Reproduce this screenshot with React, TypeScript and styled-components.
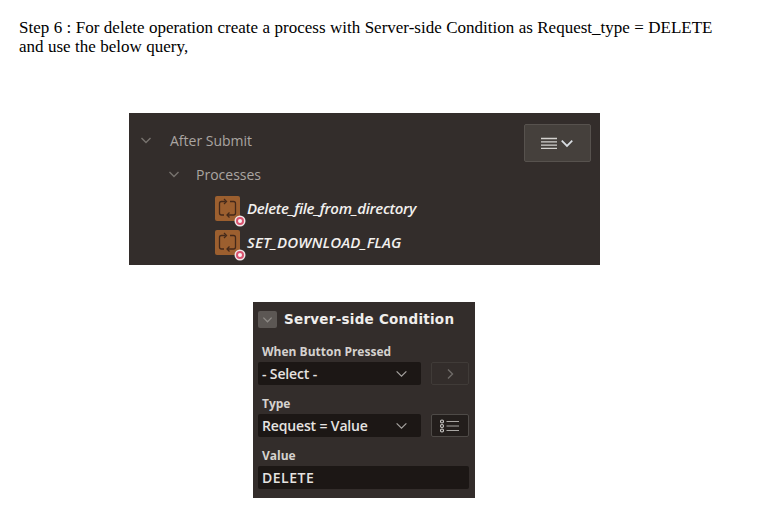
import React from "react";
import styled, { createGlobalStyle } from "styled-components";

const GlobalStyle = createGlobalStyle`
  html, body {
    margin: 0;
    padding: 0;
    background: #ffffff;
  }
`;

const Chevron = ({ size = 12, color = "#77726e", width = 1.4 }: { size?: number; color?: string; width?: number }) => (
  <svg width={size} height={size} viewBox="0 0 12 12" fill="none">
    <path d="M1.5 4 L6 8.5 L10.5 4" stroke={color} strokeWidth={width} />
  </svg>
);

const ProcessIcon = () => (
  <IconBox>
    <svg width="25" height="25" viewBox="0 0 25 25" fill="none">
      <path
        d="M10.5 5.5 H6.5 Q4.5 5.5 4.5 7.5 V17 Q4.5 19 6.5 19 H9 M15 5.5 H18.5 Q20.5 5.5 20.5 7.5 V17 Q20.5 19 18.5 19 H12"
        stroke="#44291a"
        strokeWidth="1.3"
      />
      <path d="M9 3 L11.5 5.5 L9 8 M14.5 16.5 L12 19 L14.5 21.5" stroke="#44291a" strokeWidth="1.3" />
    </svg>
    <Badge />
  </IconBox>
);

export default function App() {
  return (
    <>
      <GlobalStyle />
      <Page>
        <Step>
          Step 6 : For delete operation create a process with Server-side Condition as Request_type = DELETE
          <br />
          and use the below query,
        </Step>
        <TreePanel>
          <TreeLeft>
            <Heading $indent={11} $gap={18}>
              <Chevron />
              <span>After Submit</span>
            </Heading>
            <Heading $indent={39} $gap={16}>
              <Chevron />
              <span>Processes</span>
            </Heading>
            <ProcessRow>
              <ProcessIcon />
              <ProcessName $spacing={-0.33}>Delete_file_from_directory</ProcessName>
            </ProcessRow>
            <ProcessRow>
              <ProcessIcon />
              <ProcessName $spacing={0.15}>SET_DOWNLOAD_FLAG</ProcessName>
            </ProcessRow>
          </TreeLeft>
          <MenuButton>
            <svg width="16" height="13" viewBox="0 0 16 13" fill="none">
              <path d="M0 1.5 H16 M0 4.8 H16 M0 8.1 H16 M0 11.4 H16" stroke="#d4d2cf" strokeWidth="1.3" />
            </svg>
            <Chevron size={14} color="#d8dde2" width={1.5} />
          </MenuButton>
        </TreePanel>
        <ConditionPanel>
          <TitleRow>
            <Toggle>
              <Chevron size={11} color="#8e8a86" />
            </Toggle>
            <Title>Server-side Condition</Title>
          </TitleRow>
          <FieldLabel $top={14}>When Button Pressed</FieldLabel>
          <FieldRow>
            <SelectBox>
              <span>- Select -</span>
              <Chevron size={13} color="#a5a29f" width={1.1} />
            </SelectBox>
            <SideButton>
              <Chevron size={12} color="#6f6b68" />
            </SideButton>
          </FieldRow>
          <FieldLabel $top={10}>Type</FieldLabel>
          <FieldRow>
            <SelectBox>
              <span>Request = Value</span>
              <Chevron size={13} color="#a5a29f" width={1.1} />
            </SelectBox>
            <SideButton $active>
              <svg width="22" height="14" viewBox="0 0 22 14" fill="none">
                <circle cx="3" cy="2.5" r="1.5" stroke="#cfcdca" strokeWidth="1.1" />
                <circle cx="3" cy="7" r="1.5" stroke="#cfcdca" strokeWidth="1.1" />
                <circle cx="3" cy="11.5" r="1.5" stroke="#cfcdca" strokeWidth="1.1" />
                <path d="M7.5 2.5 H20 M7.5 7 H20 M7.5 11.5 H20" stroke="#a9a6a3" strokeWidth="1" />
              </svg>
            </SideButton>
          </FieldRow>
          <FieldLabel $top={10}>Value</FieldLabel>
          <ValueBox>DELETE</ValueBox>
        </ConditionPanel>
      </Page>
    </>
  );
}

const Page = styled.div`
  width: 778px;
  height: 508px;
  overflow: hidden;
  padding-top: 18px;
  box-sizing: border-box;
`;

const Step = styled.p`
  margin: 0 0 0 19px;
  font-family: "Liberation Serif", "Times New Roman", serif;
  font-size: 17px;
  line-height: 19px;
  word-spacing: 0.2px;
  color: #000000;
  white-space: nowrap;
`;

const TreePanel = styled.div`
  display: flex;
  justify-content: space-between;
  align-items: flex-start;
  box-sizing: border-box;
  width: 471px;
  height: 152px;
  margin: 57px 0 0 129px;
  padding: 10px 9px 0 0;
  background: #332d2b;
  font-family: "Open Sans", "Noto Sans", sans-serif;
`;

const TreeLeft = styled.div`
  display: flex;
  flex-direction: column;
`;

const Heading = styled.div<{ $indent: number; $gap: number }>`
  display: flex;
  align-items: center;
  gap: ${(p) => p.$gap}px;
  height: 34px;
  padding-left: ${(p) => p.$indent}px;
  font-size: 14px;
  font-weight: 500;
  color: #aaa5a1;
`;

const ProcessRow = styled.div`
  display: flex;
  align-items: center;
  gap: 7px;
  height: 34px;
  padding-left: 86px;
`;

const IconBox = styled.div`
  position: relative;
  width: 25px;
  height: 25px;
  border-radius: 2px;
  background: #9c5f2f;
  svg {
    display: block;
  }
`;

const Badge = styled.div`
  position: absolute;
  right: -4px;
  bottom: -4px;
  width: 4px;
  height: 4px;
  border: 2.5px solid #d9536f;
  border-radius: 50%;
  background: #fbf3f4;
  box-shadow: 0 0 0 1.5px #efe6e8;
`;

const ProcessName = styled.span<{ $spacing: number }>`
  font-size: 15px;
  font-style: italic;
  font-weight: 600;
  letter-spacing: ${(p) => p.$spacing}px;
  color: #f2f0ee;
`;

const MenuButton = styled.div`
  display: flex;
  align-items: center;
  justify-content: center;
  gap: 3px;
  box-sizing: border-box;
  width: 67px;
  height: 38px;
  margin-top: 1px;
  background: #45403c;
  border: 1px solid #57524e;
  border-radius: 2px;
`;

const ConditionPanel = styled.div`
  box-sizing: border-box;
  width: 222px;
  height: 196px;
  margin: 37px 0 0 253px;
  padding: 8px 6px 0 5px;
  background: #332d2b;
  font-family: "Open Sans", "Noto Sans", sans-serif;
`;

const TitleRow = styled.div`
  display: flex;
  align-items: center;
  gap: 7px;
  height: 19px;
`;

const Toggle = styled.div`
  display: flex;
  align-items: center;
  justify-content: center;
  width: 19px;
  height: 17px;
  border-radius: 2px;
  background: #5c5754;
`;

const Title = styled.span`
  margin-bottom: 1px;
  font-family: "DejaVu Sans", sans-serif;
  font-size: 13.5px;
  font-weight: 700;
  letter-spacing: 0.25px;
  color: #f0eeec;
`;

const FieldLabel = styled.div<{ $top: number }>`
  margin: ${(p) => p.$top}px 0 0 4px;
  height: 18px;
  line-height: 18px;
  font-size: 12px;
  font-weight: 700;
  color: #d5d2cf;
`;

const FieldRow = styled.div`
  display: flex;
  justify-content: space-between;
  margin-top: 1px;
`;

const SelectBox = styled.div`
  display: flex;
  align-items: center;
  justify-content: space-between;
  box-sizing: border-box;
  width: 163px;
  height: 23px;
  padding: 0 13px 0 4px;
  border-radius: 2px;
  background: #1c1715;
  font-size: 14px;
  font-weight: 600;
  letter-spacing: -0.15px;
  color: #e6e3e1;
`;

const SideButton = styled.div<{ $active?: boolean }>`
  display: flex;
  align-items: center;
  justify-content: center;
  box-sizing: border-box;
  width: 38px;
  height: 23px;
  border: 1px solid ${(p) => (p.$active ? "#4e4a47" : "#403b38")};
  border-radius: 2px;
  background: ${(p) => (p.$active ? "#231e1c" : "#332d2b")};
  svg {
    transform: ${(p) => (p.$active ? "none" : "rotate(-90deg)")};
  }
`;

const ValueBox = styled.div`
  box-sizing: border-box;
  height: 23px;
  margin-top: 1px;
  padding-left: 4px;
  line-height: 23px;
  border-radius: 2px;
  background: #1c1715;
  font-size: 14px;
  font-weight: 600;
  letter-spacing: 0.5px;
  color: #e6e3e1;
`;
